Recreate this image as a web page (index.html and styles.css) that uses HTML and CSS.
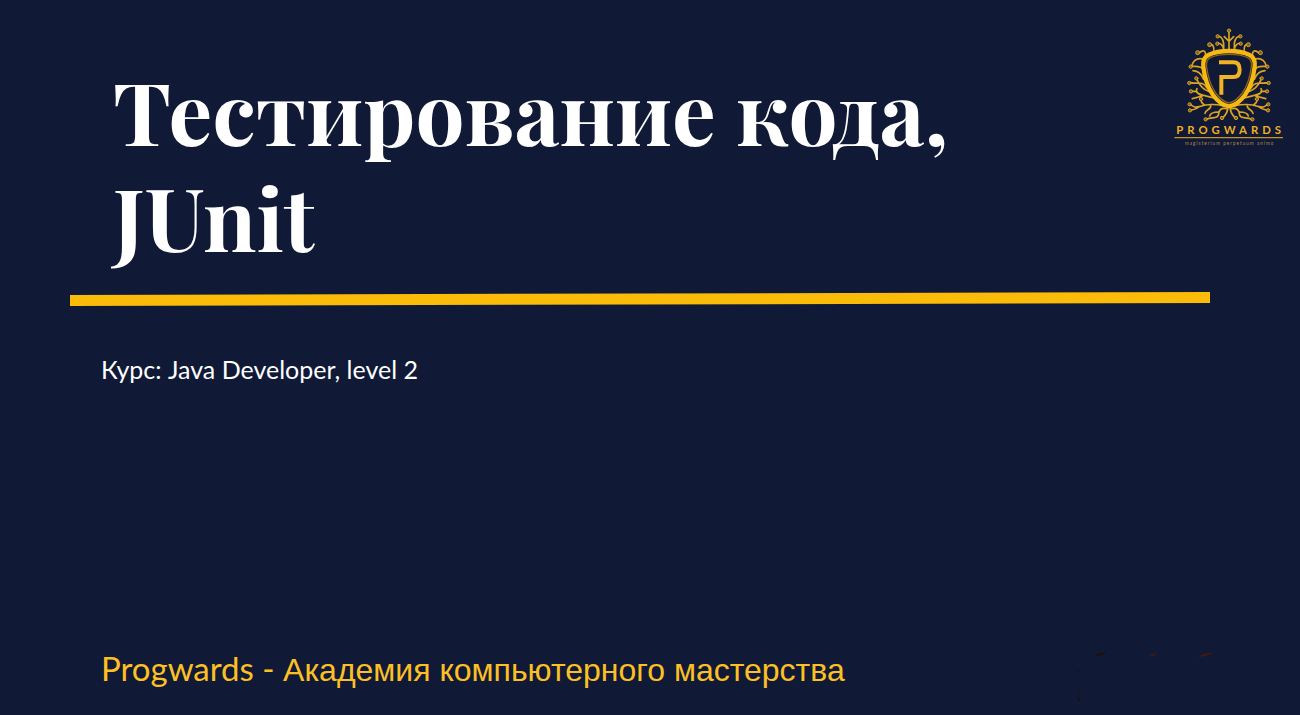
FILE: index.html
```html
<!DOCTYPE html>
<html lang="ru">
<head>
<meta charset="utf-8">
<meta name="viewport" content="width=device-width, initial-scale=1">
<title>Тестирование кода, JUnit</title>
<link rel="stylesheet" href="styles.css">
</head>
<body>
<main class="slide">
  <header class="slide-head">
    <h1 class="title">Тестирование кода,<br>JUnit</h1>
    <svg class="logo" viewBox="0 0 390 420" role="img" aria-label="Progwards">
      <defs>
        <g id="branches">
          <path d="M176 88C174 76 166 68 158 70M176 88V70C174 54 166 48 158 50"/>
          <path d="M146 96C148 80 144 72 136 74M122 106C122 90 112 90 104 98M116 118C92 110 82 128 80 138"/>
          <path d="M112 146C104 136 92 140 80 139M116 178C108 158 98 154 84 152"/>
          <path d="M126 204C112 180 96 194 76 188M130 214C104 204 100 184 94 176"/>
          <path d="M146 234C120 226 102 226 92 214L78 214M112 228L82 236M106 225C92 218 94 208 96 206"/>
          <path d="M176 258C144 250 120 254 102 260C88 264 86 260 74 252M118 255C106 246 108 240 108 238M104 259C92 268 88 270 76 270M138 254C138 272 122 266 120 280"/>
          <path d="M184 266C170 262 160 270 160 286C156 298 138 290 124 298M160 276C146 276 136 280 134 288"/>
          <path d="M188 258C190 276 182 286 172 294"/>
          <g class="bud">
            <circle cx="157" cy="71" r="5"/><circle cx="158" cy="49" r="5"/><circle cx="134" cy="74" r="6"/>
            <circle cx="98" cy="98" r="6"/><circle cx="77" cy="140" r="5"/>
            <circle cx="73" cy="189" r="5"/><circle cx="94" cy="175" r="5"/><circle cx="78" cy="214" r="5"/>
            <circle cx="108" cy="237" r="5"/><circle cx="74" cy="253" r="5"/>
            <circle cx="75" cy="271" r="5"/><circle cx="122" cy="298" r="5"/><circle cx="171" cy="294" r="5"/>
          </g>
        </g>
      </defs>
      <g class="gold-line">
        <use href="#branches"/>
        <use href="#branches" transform="matrix(-1 0 0 1 384 0)"/>
        <path d="M192 90V34M192 64L178 50M192 64L206 50"/>
        <circle class="bud" cx="192" cy="32" r="5"/>
      </g>
      <path class="shield" d="M192 93C168 93 146 97 130 105C117 111 113 122 115 140C119 174 128 202 144 225C158 244 174 257 192 259C210 257 226 244 240 225C256 202 265 174 269 140C271 122 267 111 254 105C238 97 216 93 192 93Z"/>
      <path class="shield-inner" d="M192 103C170 103 150 106 136 113C126 118 123 126 125 141C129 172 137 197 152 219C165 236 178 247 192 249C206 247 219 236 232 219C247 197 255 172 259 141C261 126 258 118 248 113C234 106 214 103 192 103Z"/>
      <path class="monogram" d="M162 127H205C218 127 224 136 224 149C224 162 218 171 205 171H169V224"/>
      <text class="logo-name" x="197" y="341">PROGWARDS</text>
      <path class="logo-rule" d="M28 353H354"/>
      <text class="logo-motto" x="194" y="374">magisterium perpetuum animo</text>
    </svg>
  </header>
  <svg class="rule" viewBox="0 0 1140 15" preserveAspectRatio="none" aria-hidden="true">
    <path d="M0 3L1140 0V11L0 14Z"/>
  </svg>
  <p class="course">Курс: Java Developer, level 2</p>
  <footer class="slide-foot">
    <p class="academy"><span class="brand">Progwards - </span>Академия компьютерного мастерства</p>
    <svg class="flecks" viewBox="0 0 150 56" aria-hidden="true">
      <path class="fleck-dark" d="M25 9V7L28 5L37 4L33 7ZM6 24L11 22V23ZM9 41L11 42L9 44ZM8 49H10V53H8Z"/>
      <path class="fleck-brown" d="M78 9L82 6L88 5L83 8ZM128 9L133 6L145 4L136 8Z"/>
    </svg>
  </footer>
</main>
</body>
</html>
```
FILE: styles.css
```css
* {
  box-sizing: border-box;
}

body {
  margin: 0;
  background: #101936;
  color: #fff;
}

.slide {
  display: flex;
  flex-direction: column;
  min-height: 100vh;
  padding: 20px 5px 11px 0;
}

.slide-head {
  display: flex;
  justify-content: space-between;
  align-items: flex-start;
  padding-left: 113px;
}

.title {
  margin: 0;
  padding-top: 37px;
  font: bold 87px/106px "Playfair Display", "Liberation Serif", serif;
}

.logo {
  flex: none;
  width: 130px;
  height: 140px;
}

.gold-line {
  fill: none;
  stroke: #d9a323;
  stroke-width: 5;
  stroke-linecap: round;
}

.bud {
  fill: #80601f;
  stroke-width: 3;
}

.shield {
  fill: #101936;
  stroke: #f5b912;
  stroke-width: 13;
  stroke-linejoin: round;
}

.shield-inner {
  fill: none;
  stroke: #8a651c;
  stroke-width: 4;
}

.monogram {
  fill: none;
  stroke: #f0b323;
  stroke-width: 12;
}

.logo-name {
  fill: #eeb022;
  font: bold 34px Lato, sans-serif;
  letter-spacing: 12px;
  text-anchor: middle;
}

.logo-rule {
  stroke: #c9951e;
  stroke-width: 4;
}

.logo-motto {
  fill: #a88a4a;
  font: 14px Lato, sans-serif;
  letter-spacing: 3px;
  text-anchor: middle;
}

.rule {
  display: block;
  height: 15px;
  margin: 23px 85px 0 70px;
  fill: #fabc09;
}

.course {
  margin: 47px 0 0 101px;
  font: 25px/30px Lato, "Liberation Sans", sans-serif;
}

.slide-foot {
  display: flex;
  justify-content: space-between;
  align-items: flex-start;
  margin-top: auto;
  padding: 0 75px 0 101px;
}

.academy {
  margin: 0;
  color: #fcc024;
  font: 32px/40px "Liberation Sans", sans-serif;
}

.brand {
  font-family: Lato, sans-serif;
  font-size: 33px;
}

.flecks {
  flex: none;
  width: 150px;
  height: 56px;
}

.fleck-dark {
  fill: #1a1210;
}

.fleck-brown {
  fill: #421a0c;
}
```
